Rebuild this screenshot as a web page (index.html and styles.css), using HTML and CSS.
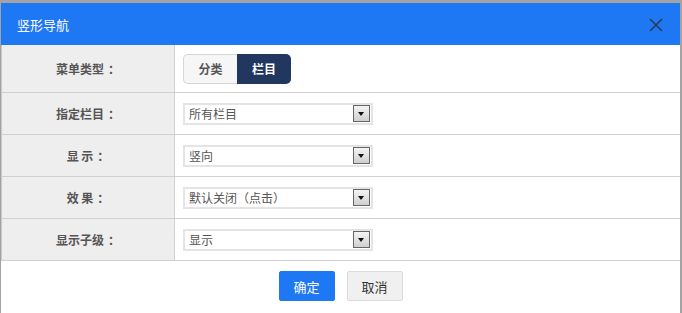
FILE: index.html
```html
<!DOCTYPE html>
<html lang="zh-CN">
<head>
    <meta charset="UTF-8">
    <title>竖形导航</title>
    <link rel="stylesheet" href="styles.css">
</head>
<body>
    <div class="dialog">
        <div class="dialog-header">
            <span class="dialog-title">竖形导航</span>
            <span class="dialog-close">
                <svg width="14" height="14" viewBox="0 0 14 14"><path d="M1 1L13 13M13 1L1 13" stroke="#2b3a55" stroke-width="1.6" fill="none"/></svg>
            </span>
        </div>

        <table class="form-table">
            <tr class="row-first">
                <th>菜单类型<span class="colon">：</span></th>
                <td>
                    <div class="toggle">
                        <span class="toggle-item">分类</span>
                        <span class="toggle-item active">栏目</span>
                    </div>
                </td>
            </tr>
            <tr>
                <th>指定栏目<span class="colon">：</span></th>
                <td><div class="select"><span>所有栏目</span><i class="select-arrow"></i></div></td>
            </tr>
            <tr>
                <th>显 示<span class="colon">：</span></th>
                <td><div class="select"><span>竖向</span><i class="select-arrow"></i></div></td>
            </tr>
            <tr>
                <th>效 果<span class="colon">：</span></th>
                <td><div class="select"><span>默认关闭（点击）</span><i class="select-arrow"></i></div></td>
            </tr>
            <tr>
                <th>显示子级<span class="colon">：</span></th>
                <td><div class="select"><span>显示</span><i class="select-arrow"></i></div></td>
            </tr>
        </table>

        <div class="dialog-footer">
            <button class="btn btn-primary">确定</button>
            <button class="btn btn-default">取消</button>
        </div>
    </div>
</body>
</html>
```

FILE: styles.css
```css
html, body {
    margin: 0;
    height: 100%;
}
body {
    font-family: "Noto Sans CJK SC", "Noto Sans", sans-serif;
    background: #a3a3a3;
    padding: 3px 2px 0 1px;
    box-sizing: border-box;
    overflow: hidden;
}
.dialog {
    background: #fff;
    height: 310px;
}
.dialog-header {
    height: 42px;
    background: #1e78f4;
    display: flex;
    align-items: center;
    justify-content: space-between;
    padding: 0 17px 0 16px;
}
.dialog-title {
    color: #fff;
    font-size: 13px;
}
.dialog-close {
    display: flex;
    margin-top: 2px;
}
.form-table {
    width: 100%;
    border-collapse: collapse;
}
.form-table th, .form-table td {
    border-bottom: 1px solid #d0d0d0;
    height: 41px;
    padding: 0;
}
.form-table .row-first th, .form-table .row-first td {
    height: 47px;
}
.form-table th {
    width: 172px;
    background: #eeeeee;
    border-right: 1px solid #d0d0d0;
    border-left: 1px solid #c8c8c8;
    font-size: 12px;
    color: #555;
    font-weight: bold;
    text-align: center;
}
.colon {
    padding-left: 4px;
}
.form-table td {
    padding-left: 8px;
}
.toggle {
    display: inline-flex;
    height: 30px;
}
.toggle-item {
    width: 54px;
    display: flex;
    align-items: center;
    justify-content: center;
    font-size: 12px;
    font-weight: bold;
    color: #555;
    background: #f6f6f6;
    border: 1px solid #d6d6d6;
    border-right: none;
    border-radius: 5px 0 0 5px;
    box-sizing: border-box;
}
.toggle-item.active {
    background: #22375f;
    color: #fff;
    border: none;
    border-radius: 0 5px 5px 0;
}
.select {
    width: 190px;
    height: 22px;
    border: 2px solid #e4e4e4;
    box-sizing: border-box;
    display: flex;
    align-items: center;
    justify-content: space-between;
    padding: 0 1px 0 4px;
    font-size: 12px;
    color: #555;
}
.select-arrow {
    width: 15px;
    height: 15px;
    border: 1px solid #666;
    background: linear-gradient(#f4f4f4, #cfcfcf);
    position: relative;
}
.select-arrow::after {
    content: "";
    position: absolute;
    left: 4px;
    top: 6px;
    border-left: 3.5px solid transparent;
    border-right: 3.5px solid transparent;
    border-top: 4px solid #111;
}
.dialog-footer {
    display: flex;
    justify-content: center;
    gap: 12px;
    padding-top: 10px;
}
.btn {
    width: 56px;
    height: 30px;
    font-family: inherit;
    font-size: 13px;
    border-radius: 2px;
    cursor: pointer;
}
.btn-primary {
    background: #1e78f4;
    border: 1px solid #1e78f4;
    color: #fff;
}
.btn-default {
    background: #f0f0f0;
    border: 1px solid #dcdcdc;
    color: #333;
}
```
